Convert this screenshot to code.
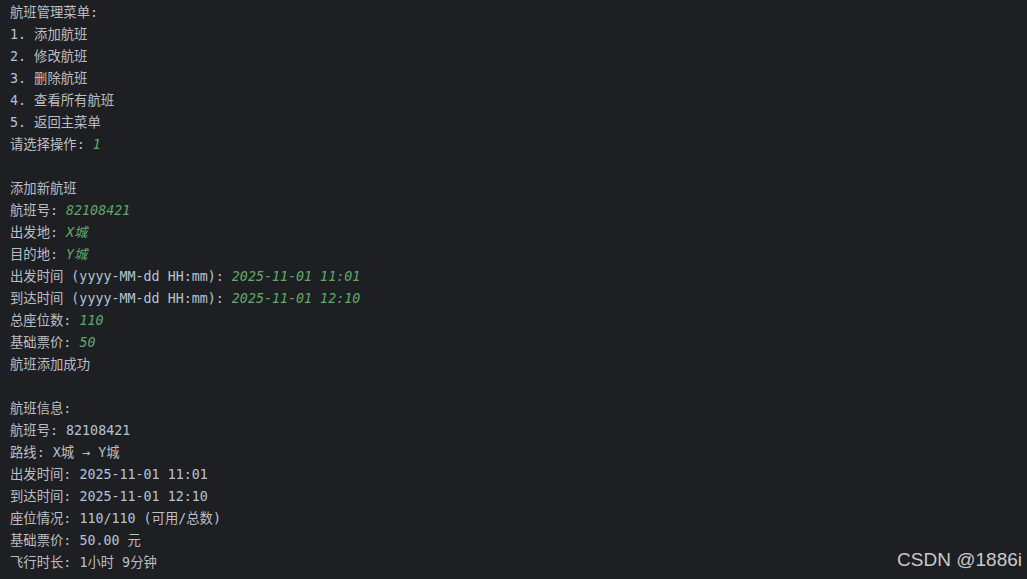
import React from "react";

// console colours
const TXT = "text-[#bcbec4]";
const NUM = "text-[#b3c3d8]";
const INPUT = "text-[#5fa96b] italic";

type Seg = [string, string?];

const lines: Seg[][] = [
    [["航班管理菜单:"]],
    [["1.", NUM], [" 添加航班"]],
    [["2.", NUM], [" 修改航班"]],
    [["3.", NUM], [" 删除航班"]],
    [["4.", NUM], [" 查看所有航班"]],
    [["5.", NUM], [" 返回主菜单"]],
    [["请选择操作: "], ["1", INPUT]],
    [],
    [["添加新航班"]],
    [["航班号: "], ["82108421", INPUT]],
    [["出发地: "], ["X城", INPUT]],
    [["目的地: "], ["Y城", INPUT]],
    [["出发时间 "], ["(yyyy-MM-dd HH:mm)", NUM], [": "], ["2025-11-01 11:01", INPUT]],
    [["到达时间 "], ["(yyyy-MM-dd HH:mm)", NUM], [": "], ["2025-11-01 12:10", INPUT]],
    [["总座位数: "], ["110", INPUT]],
    [["基础票价: "], ["50", INPUT]],
    [["航班添加成功"]],
    [],
    [["航班信息:"]],
    [["航班号: "], ["82108421", NUM]],
    [["路线: "], ["X", NUM], ["城 "], ["→ Y", NUM], ["城"]],
    [["出发时间: "], ["2025-11-01 11:01", NUM]],
    [["到达时间: "], ["2025-11-01 12:10", NUM]],
    [["座位情况: "], ["110/110 (", NUM], ["可用"], ["/", NUM], ["总数"], [")", NUM]],
    [["基础票价: "], ["50.00", NUM], [" 元"]],
    [["飞行时长: "], ["1", NUM], ["小时 "], ["9", NUM], ["分钟"]],
];

const Line = ({segs}: { segs: Seg[] }) => (
    <div className="h-[22px] leading-[22px] whitespace-pre">
        {segs.length === 0 ? " " : segs.map(([t, c], i) => (
            <span key={i} className={c ?? TXT}>{t}</span>
        ))}
    </div>
);

export default function App() {
    return (
        <div className="relative w-[1027px] h-[579px] overflow-hidden bg-[#1e1f22]">
            <div className="pt-[2px] pl-[10px] text-[13.33px] font-['DejaVu_Sans_Mono','Noto_Sans_CJK_SC',monospace]">
                {lines.map((l, i) => <Line key={i} segs={l}/>)}
            </div>
            <div className="absolute right-[5px] bottom-[10px] text-[19px] leading-none text-[#c9c9c9] font-['Liberation_Sans',Arial,sans-serif]">
                CSDN @1886i
            </div>
        </div>
    );
}
